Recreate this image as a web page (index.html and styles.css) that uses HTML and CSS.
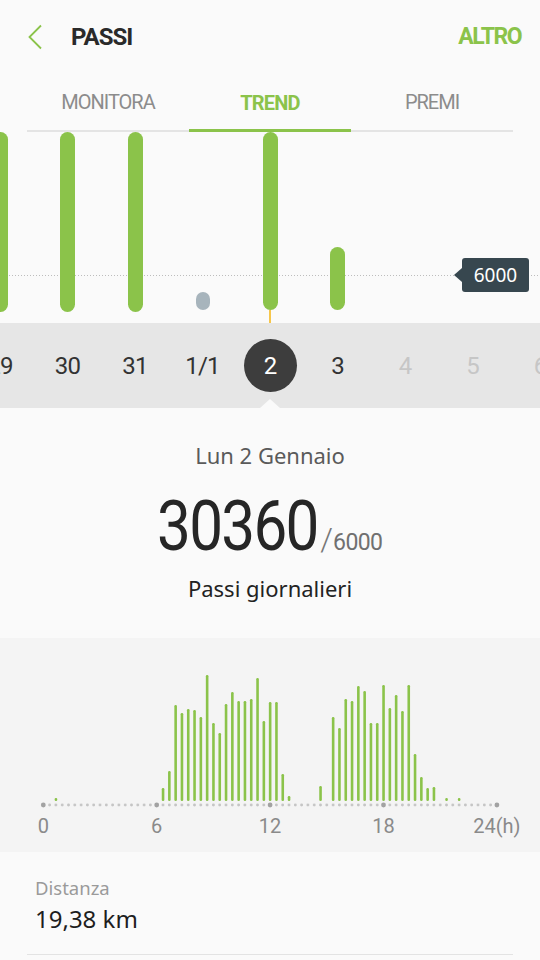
FILE: index.html
```html
<!DOCTYPE html>
<html lang="it">
<head>
    <meta charset="UTF-8">
    <meta name="viewport" content="width=device-width, initial-scale=1.0">
    <title>Passi</title>
    <link rel="stylesheet" href="styles.css">
</head>
<body>
    <!-- Top bar -->
    <header class="topbar">
        <a class="back" href="#">
            <svg width="14" height="26" viewBox="0 0 14 26"><polyline points="13,1.5 1.5,13 13,24.5" fill="none" stroke="#8bc34a" stroke-width="1.8"/></svg>
        </a>
        <h1 class="title">PASSI</h1>
        <span class="more">ALTRO</span>
    </header>

    <nav class="tabs">
        <span class="tab">MONITORA</span>
        <span class="tab active">TREND</span>
        <span class="tab">PREMI</span>
    </nav>

    <!-- Daily trend bars -->
    <section class="trend">
        <div class="goal-line"></div>
        <div class="cols">
            <div class="col"><div class="bar" style="height:220px"></div><div class="stem"></div></div>
            <div class="col"><div class="bar" style="height:220px"></div><div class="stem"></div></div>
            <div class="col"><div class="bar" style="height:220px"></div><div class="stem"></div></div>
            <div class="col"><div class="bar empty" style="height:18px"></div><div class="stem"></div></div>
            <div class="col"><div class="bar" style="height:179px"></div><div class="stem active"></div></div>
            <div class="col"><div class="bar" style="height:63px"></div><div class="stem"></div></div>
            <div class="col"><div class="stem"></div></div>
            <div class="col"><div class="stem"></div></div>
            <div class="col"><div class="stem"></div></div>
        </div>
        <div class="goal-tip">6000</div>
    </section>

    <div class="dates">
        <div class="date">29</div>
        <div class="date">30</div>
        <div class="date">31</div>
        <div class="date">1/1</div>
        <div class="date current"><span class="circle">2</span></div>
        <div class="date">3</div>
        <div class="date future">4</div>
        <div class="date future">5</div>
        <div class="date future">6</div>
    </div>

    <!-- Day summary -->
    <section class="summary">
        <p class="day">Lun 2 Gennaio</p>
        <p class="count"><span class="steps">30360</span><span class="slash">/</span><span class="target">6000</span></p>
        <p class="caption">Passi giornalieri</p>
    </section>

    <section class="hourly">
        <svg class="hourly-chart" width="540" height="150" viewBox="0 0 540 150">
            <defs>
                <pattern id="dots" x="40.15" y="142" width="6.3" height="6" patternUnits="userSpaceOnUse">
                    <circle cx="3.15" cy="3" r="1.4" fill="#c4c4c4"/>
                </pattern>
            </defs>
            <rect x="40.15" y="142" width="459.9" height="6" fill="url(#dots)"/>
            <circle cx="43.3" cy="145" r="2.4" fill="#a2a2a2"/>
            <circle cx="156.7" cy="145" r="2.4" fill="#a2a2a2"/>
            <circle cx="270.1" cy="145" r="2.4" fill="#a2a2a2"/>
            <circle cx="383.5" cy="145" r="2.4" fill="#a2a2a2"/>
            <circle cx="496.9" cy="145" r="2.4" fill="#a2a2a2"/>
            <g fill="#8bc34a">
                <rect x="54.65" y="138" width="2.6" height="3" rx="1.2"/>
                <rect x="161.75" y="128" width="2.6" height="13" rx="1.2"/>
                <rect x="168.05" y="111" width="2.6" height="30" rx="1.2"/>
                <rect x="174.35" y="45" width="2.6" height="96" rx="1.2"/>
                <rect x="180.65" y="53" width="2.6" height="88" rx="1.2"/>
                <rect x="186.95" y="49" width="2.6" height="92" rx="1.2"/>
                <rect x="193.25" y="50" width="2.6" height="91" rx="1.2"/>
                <rect x="199.55" y="57" width="2.6" height="84" rx="1.2"/>
                <rect x="205.85" y="15" width="2.6" height="126" rx="1.2"/>
                <rect x="212.15" y="63" width="2.6" height="78" rx="1.2"/>
                <rect x="218.45" y="73" width="2.6" height="68" rx="1.2"/>
                <rect x="224.75" y="44" width="2.6" height="97" rx="1.2"/>
                <rect x="231.05" y="32" width="2.6" height="109" rx="1.2"/>
                <rect x="237.35" y="41" width="2.6" height="100" rx="1.2"/>
                <rect x="243.65" y="41" width="2.6" height="100" rx="1.2"/>
                <rect x="249.95" y="39" width="2.6" height="102" rx="1.2"/>
                <rect x="256.25" y="18" width="2.6" height="123" rx="1.2"/>
                <rect x="262.55" y="61" width="2.6" height="80" rx="1.2"/>
                <rect x="268.85" y="42" width="2.6" height="99" rx="1.2"/>
                <rect x="275.15" y="42" width="2.6" height="99" rx="1.2"/>
                <rect x="281.45" y="114" width="2.6" height="27" rx="1.2"/>
                <rect x="287.75" y="136" width="2.6" height="5" rx="1.2"/>
                <rect x="319.25" y="126" width="2.6" height="15" rx="1.2"/>
                <rect x="331.85" y="57" width="2.6" height="84" rx="1.2"/>
                <rect x="338.15" y="68" width="2.6" height="73" rx="1.2"/>
                <rect x="344.45" y="39" width="2.6" height="102" rx="1.2"/>
                <rect x="350.75" y="41" width="2.6" height="100" rx="1.2"/>
                <rect x="357.05" y="26" width="2.6" height="115" rx="1.2"/>
                <rect x="363.35" y="31" width="2.6" height="110" rx="1.2"/>
                <rect x="369.65" y="63" width="2.6" height="78" rx="1.2"/>
                <rect x="375.95" y="63" width="2.6" height="78" rx="1.2"/>
                <rect x="382.25" y="25" width="2.6" height="116" rx="1.2"/>
                <rect x="388.55" y="48" width="2.6" height="93" rx="1.2"/>
                <rect x="394.85" y="35" width="2.6" height="106" rx="1.2"/>
                <rect x="401.15" y="51" width="2.6" height="90" rx="1.2"/>
                <rect x="407.45" y="25" width="2.6" height="116" rx="1.2"/>
                <rect x="413.75" y="94" width="2.6" height="47" rx="1.2"/>
                <rect x="420.05" y="117" width="2.6" height="24" rx="1.2"/>
                <rect x="426.35" y="128" width="2.6" height="13" rx="1.2"/>
                <rect x="432.65" y="127" width="2.6" height="14" rx="1.2"/>
                <rect x="445.25" y="138" width="2.6" height="3" rx="1.2"/>
                <rect x="457.85" y="138" width="2.6" height="3" rx="1.2"/>
            </g>
        </svg>
        <div class="hours">
            <span>0</span>
            <span>6</span>
            <span>12</span>
            <span>18</span>
            <span>24(h)</span>
        </div>
    </section>

    <!-- Details -->
    <section class="stats">
        <div class="stat">
            <div class="stat-label">Distanza</div>
            <div class="stat-value">19,38 km</div>
        </div>
    </section>
</body>
</html>
```

FILE: styles.css
```css
body {
    margin: 0;
    padding: 0;
    width: 540px;
    background-color: #fafafa;
    font-family: Roboto, "Noto Sans", sans-serif;
    color: #222;
    overflow: hidden;
}

p {
    margin: 0;
}

/* Top bar */
.topbar {
    display: flex;
    align-items: center;
    height: 74px;
    padding: 0 19px 0 28px;
}

.back {
    display: flex;
    width: 14px;
    height: 26px;
    margin-right: 29px;
}

.title {
    flex: 1;
    margin: 0;
    font-size: 24px;
    line-height: 24px;
    font-weight: 700;
    letter-spacing: -1px;
    color: #2a2a2a;
}

.more {
    font-size: 23px;
    line-height: 24px;
    font-weight: 700;
    letter-spacing: -1.5px;
    color: #8bc34a;
}

/* Tabs */
.tabs {
    display: grid;
    grid-template-columns: repeat(3, 1fr);
    margin: 0 27px;
    height: 56px;
    border-bottom: 2px solid #e4e4e4;
}

.tab {
    display: flex;
    align-items: center;
    justify-content: center;
    font-size: 20px;
    letter-spacing: -1px;
    color: #8c8c8c;
}

.tab.active {
    color: #8bc34a;
    font-weight: 700;
    letter-spacing: -0.8px;
    border-bottom: 3px solid #8bc34a;
    margin-bottom: -2px;
    padding-top: 2px;
}

/* Trend chart */
.trend {
    position: relative;
    height: 191px;
    overflow: hidden;
}

.goal-line {
    position: absolute;
    top: 143px;
    left: 0;
    right: 0;
    height: 1px;
    background-image: linear-gradient(to right, #bdbdbd 1px, transparent 1px);
    background-size: 3px 1px;
}

.cols {
    position: relative;
    display: flex;
    height: 191px;
    margin-left: -33.75px;
}

.col {
    width: 67.5px;
    flex-shrink: 0;
    display: flex;
    flex-direction: column;
    align-items: center;
    justify-content: flex-end;
}

.bar {
    width: 15px;
    border-radius: 7.5px;
    background-color: #8bc34a;
}

.bar.empty {
    width: 14px;
    border-radius: 7px;
    background-color: #a7b4bc;
}

.stem {
    width: 2px;
    height: 13px;
}

.stem.active {
    background-color: #f6c64c;
}

.goal-tip {
    position: absolute;
    top: 126px;
    left: 462px;
    width: 67px;
    height: 34px;
    border-radius: 3px;
    background-color: #37474f;
    color: #fff;
    font-family: "Noto Sans", sans-serif;
    font-size: 19px;
    line-height: 34px;
    text-align: center;
}

.goal-tip::before {
    content: "";
    position: absolute;
    left: -8px;
    top: 10px;
    border-top: 7px solid transparent;
    border-bottom: 7px solid transparent;
    border-right: 8px solid #37474f;
}

/* Date strip */
.dates {
    display: flex;
    height: 85px;
    margin-left: -33.75px;
    background-color: #e6e6e6;
    width: 607.5px;
}

.date {
    position: relative;
    width: 67.5px;
    flex-shrink: 0;
    display: flex;
    align-items: center;
    justify-content: center;
    font-size: 24px;
    letter-spacing: -0.8px;
    color: #333;
}

.date.future {
    color: #c6c6c6;
}

.circle {
    display: flex;
    align-items: center;
    justify-content: center;
    width: 53px;
    height: 53px;
    border-radius: 50%;
    background-color: #3d3d3d;
    color: #fff;
}

.date.current::after {
    content: "";
    position: absolute;
    bottom: 0;
    left: 23.75px;
    border-left: 10px solid transparent;
    border-right: 10px solid transparent;
    border-bottom: 9px solid #fafafa;
}

/* Summary */
.summary {
    height: 198px;
    padding-top: 32px;
    text-align: center;
}

.day {
    font-family: "Noto Sans", sans-serif;
    font-size: 22px;
    line-height: 30px;
    color: #5a5a5a;
}

.count {
    margin-top: 16px;
    height: 80px;
    line-height: 80px;
    white-space: nowrap;
}

.steps {
    display: inline-block;
    font-size: 70px;
    letter-spacing: -2px;
    color: #262626;
    transform: scaleX(0.86);
    margin: 0 -14px;
}

.slash {
    font-size: 32px;
    font-weight: 300;
    line-height: 1;
    color: #777;
    margin-left: 4px;
}

.target {
    font-size: 23px;
    line-height: 1;
    letter-spacing: -0.6px;
    color: #707070;
}

.caption {
    margin-top: 7px;
    font-family: "Noto Sans", sans-serif;
    font-size: 22px;
    line-height: 30px;
    color: #222;
}

/* Hourly chart */
.hourly {
    background-color: #f4f4f4;
    padding: 22px 0 16px;
}

.hourly-chart {
    display: block;
}

.hours {
    display: flex;
    width: 567px;
    margin: 6px 0 0 -13.4px;
    font-size: 20px;
    line-height: 20px;
    color: #8a8a8a;
}

.hours span {
    width: 113.4px;
    text-align: center;
}

/* Stats */
.stats {
    padding: 0 27px;
}

.stat {
    padding: 24px 8px 20px;
    border-bottom: 1px solid #e3e3e3;
    font-family: "Noto Sans", sans-serif;
}

.stat-label {
    font-size: 18.5px;
    line-height: 24px;
    color: #9a9a9a;
}

.stat-value {
    margin-top: 4px;
    font-size: 24px;
    line-height: 30px;
    color: #1e1e1e;
}
```
